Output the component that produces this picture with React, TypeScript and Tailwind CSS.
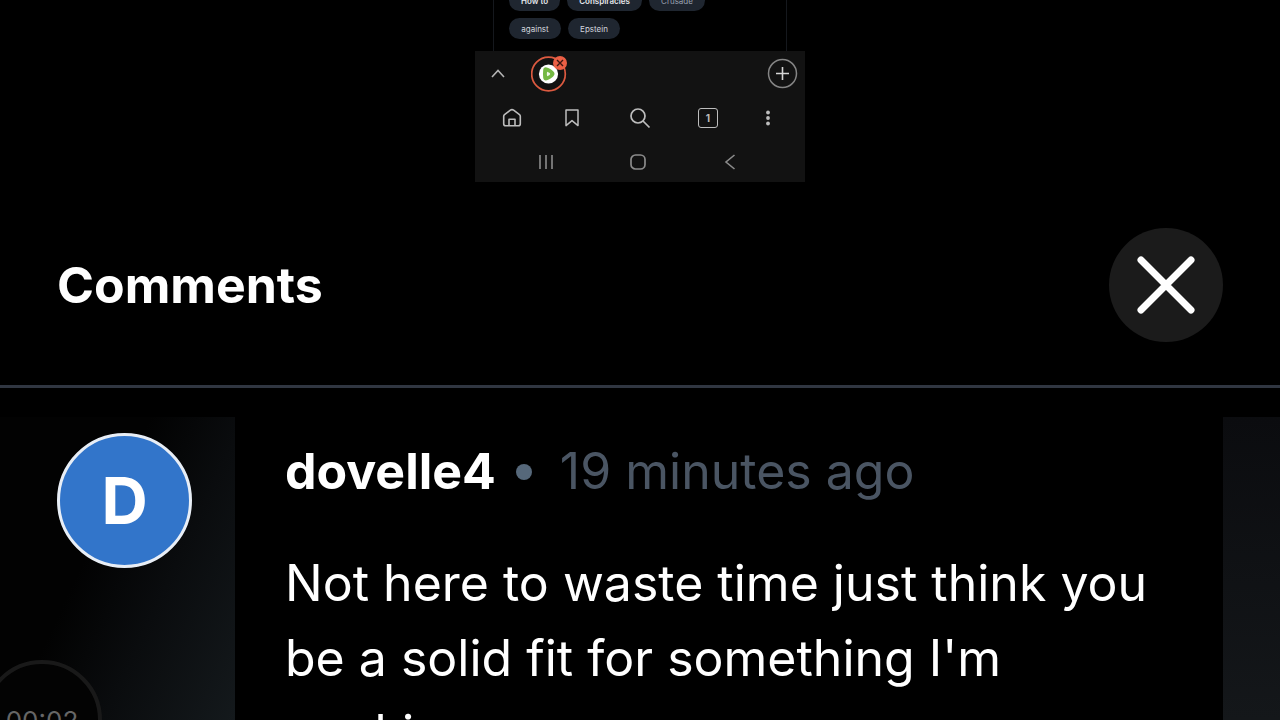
import { useState } from "react";

const TAGS = [
  [
    { label: "How to", className: "w-[51px] text-gray-200 font-semibold" },
    { label: "Conspiracies", className: "w-[75px] text-gray-200 font-semibold" },
    { label: "Crusade", className: "w-[56px] text-gray-400" },
  ],
  [
    { label: "against", className: "w-[52px] text-gray-300" },
    { label: "Epstein", className: "w-[52px] text-gray-300" },
  ],
];

const COMMENTS = [
  {
    id: 1,
    author: "dovelle4",
    time: "19 minutes ago",
    text: "Not here to waste time just think you be a solid fit for something I'm working",
  },
];

function TagList() {
  return (
    <div className="flex h-[51px] flex-col justify-end overflow-hidden px-[18px]">
      <div className="flex flex-col gap-[7px] border-x border-[#15181d] px-[15px] pb-3">
        {TAGS.map((row, i) => (
          <div key={i} className="flex gap-[7px]">
            {row.map(tag => (
              <a
                key={tag.label}
                href="#"
                className={`flex h-[21px] items-center justify-center rounded-full bg-[#1f2630] text-[8px] ${tag.className}`}
              >
                {tag.label}
              </a>
            ))}
          </div>
        ))}
      </div>
    </div>
  );
}

function TabStrip() {
  return (
    <div className="flex h-[45px] items-center justify-between pr-[7px] pl-[14px]">
      <div className="flex items-center gap-6">
        <button aria-label="Expand tabs" className="text-[#b4b4b4]">
          <svg width="18" height="18" viewBox="0 0 18 18" fill="none" stroke="currentColor" strokeWidth="1.6">
            <path d="M3 12 9 5.500l6 6.500" />
          </svg>
        </button>
        <button aria-label="Rumble tab">
          <svg width="38" height="40" viewBox="0 0 38 40" fill="none">
            <circle cx="17.500" cy="20" r="16.800" stroke="#dc5a40" strokeWidth="1.700" />
            <circle cx="17.500" cy="20" r="9.600" fill="#fff" />
            <path
              d="M12.200 16c.3-3 2.300-3.200 5-1.900 2.700 1.300 6.300 3.300 6.300 5.700 0 2.500-3.700 4.800-6.300 6-2.700 1.200-4.600.8-5-2-.3-2.500-.3-5.300 0-7.800Z"
              fill="#74b843"
            />
            <path d="M16.200 17.800c1.400.4 3 1.400 3 2.200s-1.600 1.800-3 2.200c-.5-1.300-.5-3.100 0-4.400Z" fill="#eef7e6" />
            <circle cx="29" cy="9" r="7" fill="#ec5f45" />
            <path d="m26 6 6 6m0-6-6 6" stroke="#3a1510" strokeWidth="1.400" />
          </svg>
        </button>
      </div>
      <button aria-label="New tab">
        <svg width="31" height="31" viewBox="0 0 31 31" fill="none">
          <circle cx="15.500" cy="15.500" r="14" stroke="#858585" strokeWidth="1.500" />
          <path d="M15.500 9v13M9 15.500h13" stroke="#d6d6d6" strokeWidth="1.600" />
        </svg>
      </button>
    </div>
  );
}

function BrowserToolbar() {
  return (
    <div className="flex h-[44px] items-center justify-between pr-[29px] pl-[27px] text-[#bdbdbd]">
      <div className="flex items-center gap-[41px]">
        <button aria-label="Home">
          <svg width="20" height="20" viewBox="0 0 20 20" fill="none" stroke="currentColor" strokeWidth="1.600" strokeLinejoin="round">
            <path d="M1.700 8.200c0-.7.300-1.200.8-1.600l5.900-4.400c1-.7 2.200-.7 3.200 0l5.900 4.400c.5.400.8.900.8 1.600v7.500c0 1.200-.9 2.100-2.100 2.100H3.800c-1.200 0-2.100-.9-2.100-2.100Z" />
            <path d="M7 17.500v-6.200h6v6.200" />
          </svg>
        </button>
        <button aria-label="Bookmarks">
          <svg width="18" height="20" viewBox="0 0 18 20" fill="none" stroke="currentColor" strokeWidth="1.500" strokeLinejoin="round">
            <path d="M3 2h12v15.600l-6-5-6 5Z" />
          </svg>
        </button>
      </div>
      <button aria-label="Search">
        <svg width="22" height="22" viewBox="0 0 22 22" fill="none" stroke="currentColor" strokeWidth="1.700">
          <circle cx="9" cy="9" r="7" />
          <path d="m14 14 6.500 6.500" />
        </svg>
      </button>
      <div className="flex items-center gap-[42px]">
        <button
          aria-label="Open tabs"
          className="flex size-5 items-center justify-center rounded-[3px] border border-[#bdbdbd] text-[10px] leading-none font-bold"
        >
          1
        </button>
        <button aria-label="Menu">
          <svg width="16" height="20" viewBox="0 0 16 20" fill="currentColor">
            <circle cx="8" cy="4.500" r="1.900" />
            <circle cx="8" cy="10" r="1.900" />
            <circle cx="8" cy="15.500" r="1.900" />
          </svg>
        </button>
      </div>
    </div>
  );
}

function SystemNav() {
  return (
    <div className="flex h-[42px] items-center justify-between pt-[2px] pr-[66px] pl-[62px] text-[#8c8c8c]">
      <button aria-label="Recent apps">
        <svg width="18" height="18" viewBox="0 0 18 18" fill="none" stroke="currentColor" strokeWidth="1.600">
          <path d="M3 2v14M9 2v14M15 2v14" />
        </svg>
      </button>
      <button aria-label="Home screen">
        <svg width="18" height="18" viewBox="0 0 18 18" fill="none" stroke="currentColor" strokeWidth="1.700">
          <rect x="2" y="2" width="14" height="14" rx="4.500" />
        </svg>
      </button>
      <button aria-label="Back">
        <svg width="18" height="18" viewBox="0 0 18 18" fill="none" stroke="currentColor" strokeWidth="1.600">
          <path d="M13.500 2 5 9l8.500 7" />
        </svg>
      </button>
    </div>
  );
}

function PhonePreview() {
  return (
    <section className="mx-auto w-[330px] shrink-0">
      <TagList />
      <div className="bg-[#121212]">
        <TabStrip />
        <BrowserToolbar />
        <SystemNav />
      </div>
    </section>
  );
}

function CommentItem({ author, time, text }: { author: string; time: string; text: string }) {
  return (
    <article className="flex min-h-0 flex-1">
      <div className="relative w-[235px] shrink-0 overflow-hidden bg-[linear-gradient(115deg,#020202_40%,#0a0c0e_65%,#14191c)] pt-4 pl-[57px]">
        <div className="flex size-[135px] items-center justify-center rounded-full border-3 border-[#e8eef6] bg-[#3275ca] text-[64px] leading-none font-bold">
          {author[0].toUpperCase()}
        </div>
        {/* recording timer sitting behind the list */}
        <div className="absolute top-[243px] -left-[18px] flex size-[120px] items-center justify-center rounded-full border-4 border-[#191919] bg-[#030303] text-[26px] text-[#666]">
          00:02
        </div>
      </div>
      <div className="min-w-0 flex-1 pt-[17px] pr-6 pl-[50px]">
        <div className="flex h-[75px] items-center text-[50px]">
          <span className="font-bold">{author}</span>
          <span className="mr-7 ml-5 size-4 rounded-full bg-[#56687a]" />
          <time className="text-[#4a5563]">{time}</time>
        </div>
        <p className="mt-[37px] text-[50px] leading-[75px]">{text}</p>
      </div>
      <div className="w-[57px] shrink-0 bg-linear-to-b from-[#0b0c0f] to-[#14171a]" />
    </article>
  );
}

export default function App() {
  const [open, setOpen] = useState(true);

  return (
    <main className="flex h-screen flex-col overflow-hidden bg-black font-['Inter',sans-serif] text-white">
      <PhonePreview />
      {open && (
        <>
          <header className="mt-[46px] flex shrink-0 items-start justify-between border-b-3 border-[#303641] pr-[57px] pb-[43px] pl-[57px]">
            <h2 className="text-[50px] leading-[114px] font-bold">Comments</h2>
            <button
              aria-label="Close comments"
              onClick={() => setOpen(false)}
              className="flex size-[114px] items-center justify-center rounded-full bg-[#1b1b1b]"
            >
              <svg width="60" height="60" viewBox="0 0 60 60" fill="none" stroke="currentColor" strokeWidth="7" strokeLinecap="round">
                <path d="m5 5 50 50M55 5 5 55" />
              </svg>
            </button>
          </header>
          <div className="flex min-h-0 flex-1 flex-col pt-[29px]">
            {COMMENTS.map(c => (
              <CommentItem key={c.id} author={c.author} time={c.time} text={c.text} />
            ))}
          </div>
        </>
      )}
    </main>
  );
}
